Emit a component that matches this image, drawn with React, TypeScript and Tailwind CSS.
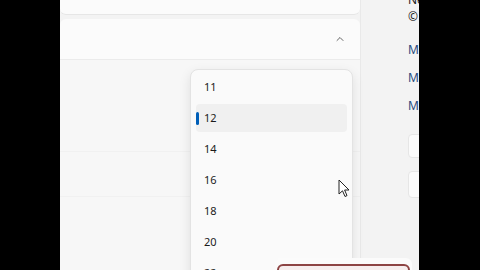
import { ChevronUp } from 'lucide-react';

const sizes = ['11', '12', '14', '16', '18', '20', '22'];

function Cursor() {
  return (
    <svg className="absolute left-[338px] top-[179px]" width="14" height="20" viewBox="0 0 14 20">
      <path d="M1 1 L1 15 L4.5 11.8 L7 17.5 L9 16.6 L6.6 11 L11 11 Z" fill="#ffffff" stroke="#222222" strokeWidth="1" strokeLinejoin="round" />
    </svg>
  );
}

export default function App() {
  return (
    <div className="relative flex w-[480px] h-[270px] overflow-hidden bg-black" style={{ fontFamily: '"Noto Sans", "Open Sans", sans-serif' }}>
      <div className="w-[60px] shrink-0 bg-black" />

      <div className="relative flex w-[359px] shrink-0 bg-[#f3f3f3] overflow-hidden">
        {/* main column */}
        <div className="relative flex w-[300px] shrink-0 flex-col">
          <div className="h-[15px] rounded-b-md border-b border-[#e6e6e6] bg-[#fbfbfb]" />
          <div className="mt-[4px] flex h-[41px] items-center justify-end rounded-t-md border-b border-[#ebebeb] bg-[#fbfbfb] pr-[14px]">
            <ChevronUp className="h-[12px] w-[12px] text-[#333333]" strokeWidth={1.5} />
          </div>
          <div className="flex flex-1 flex-col bg-[#f7f7f7]">
            <div className="h-[92px] border-b border-[#f1f1f1]" />
            <div className="h-[45px] border-b border-[#f1f1f1]" />
            <div className="flex-1" />
          </div>

          {/* dropdown */}
          <div className="absolute left-[130px] top-[69px] w-[163px] h-[220px] rounded-lg border border-[#e3e3e3] bg-[#fafafa] px-[5px] pt-[3px] shadow-[0_4px_12px_rgba(0,0,0,0.10)]">
            <div className="flex flex-col gap-[3px]">
              {sizes.map((s) => (
                <div
                  key={s}
                  className={
                    s === '12'
                      ? 'relative flex h-[28px] items-center rounded-[4px] bg-[#f0f0f0] pl-[8px] text-[11px] text-[#1b1b1b]'
                      : 'relative flex h-[28px] items-center rounded-[4px] pl-[8px] text-[11px] text-[#1b1b1b]'
                  }
                >
                  {s === '12' && <span className="absolute left-0 top-[8px] h-[13px] w-[3px] rounded-full bg-[#005fb8]" />}
                  {s}
                </div>
              ))}
            </div>
          </div>
        </div>

        {/* right rail line */}
        <div className="w-[1px] shrink-0 bg-[#e9e9e9]" />

        {/* sidebar */}
        <div className="flex flex-1 flex-col whitespace-nowrap pl-[47px] text-[12px] leading-none">
          <div className="-mt-[6px] text-[#1b1b1b]">Neue Version</div>
          <div className="mt-[5px] text-[#1b1b1b]">© Microsoft</div>
          <div className="mt-[21px] text-[#284a7e]">Microsoft Store</div>
          <div className="mt-[16px] text-[#284a7e]">Mehr erfahren</div>
          <div className="mt-[16px] text-[#284a7e]">Mehr Hilfe</div>
          <div className="mt-[22px] h-[24px] w-[40px] rounded-l-[4px] border border-[#e6e6e6] bg-[#fbfbfb]" />
          <div className="mt-[13px] h-[27px] w-[40px] rounded-l-[4px] border border-[#e6e6e6] bg-[#fbfbfb]" />
        </div>
      </div>

      <div className="w-[61px] shrink-0 bg-black" />

      {/* bottom overlay */}
      <div className="absolute left-[275px] top-[258px] h-[20px] w-[137px] rounded-t-md bg-[#fbfbfb] px-[2px] pt-[6px]">
        <div className="h-[14px] rounded-md border-2 border-[#8d4444] bg-[#f6eeee]" />
      </div>

      <Cursor />
    </div>
  );
}
